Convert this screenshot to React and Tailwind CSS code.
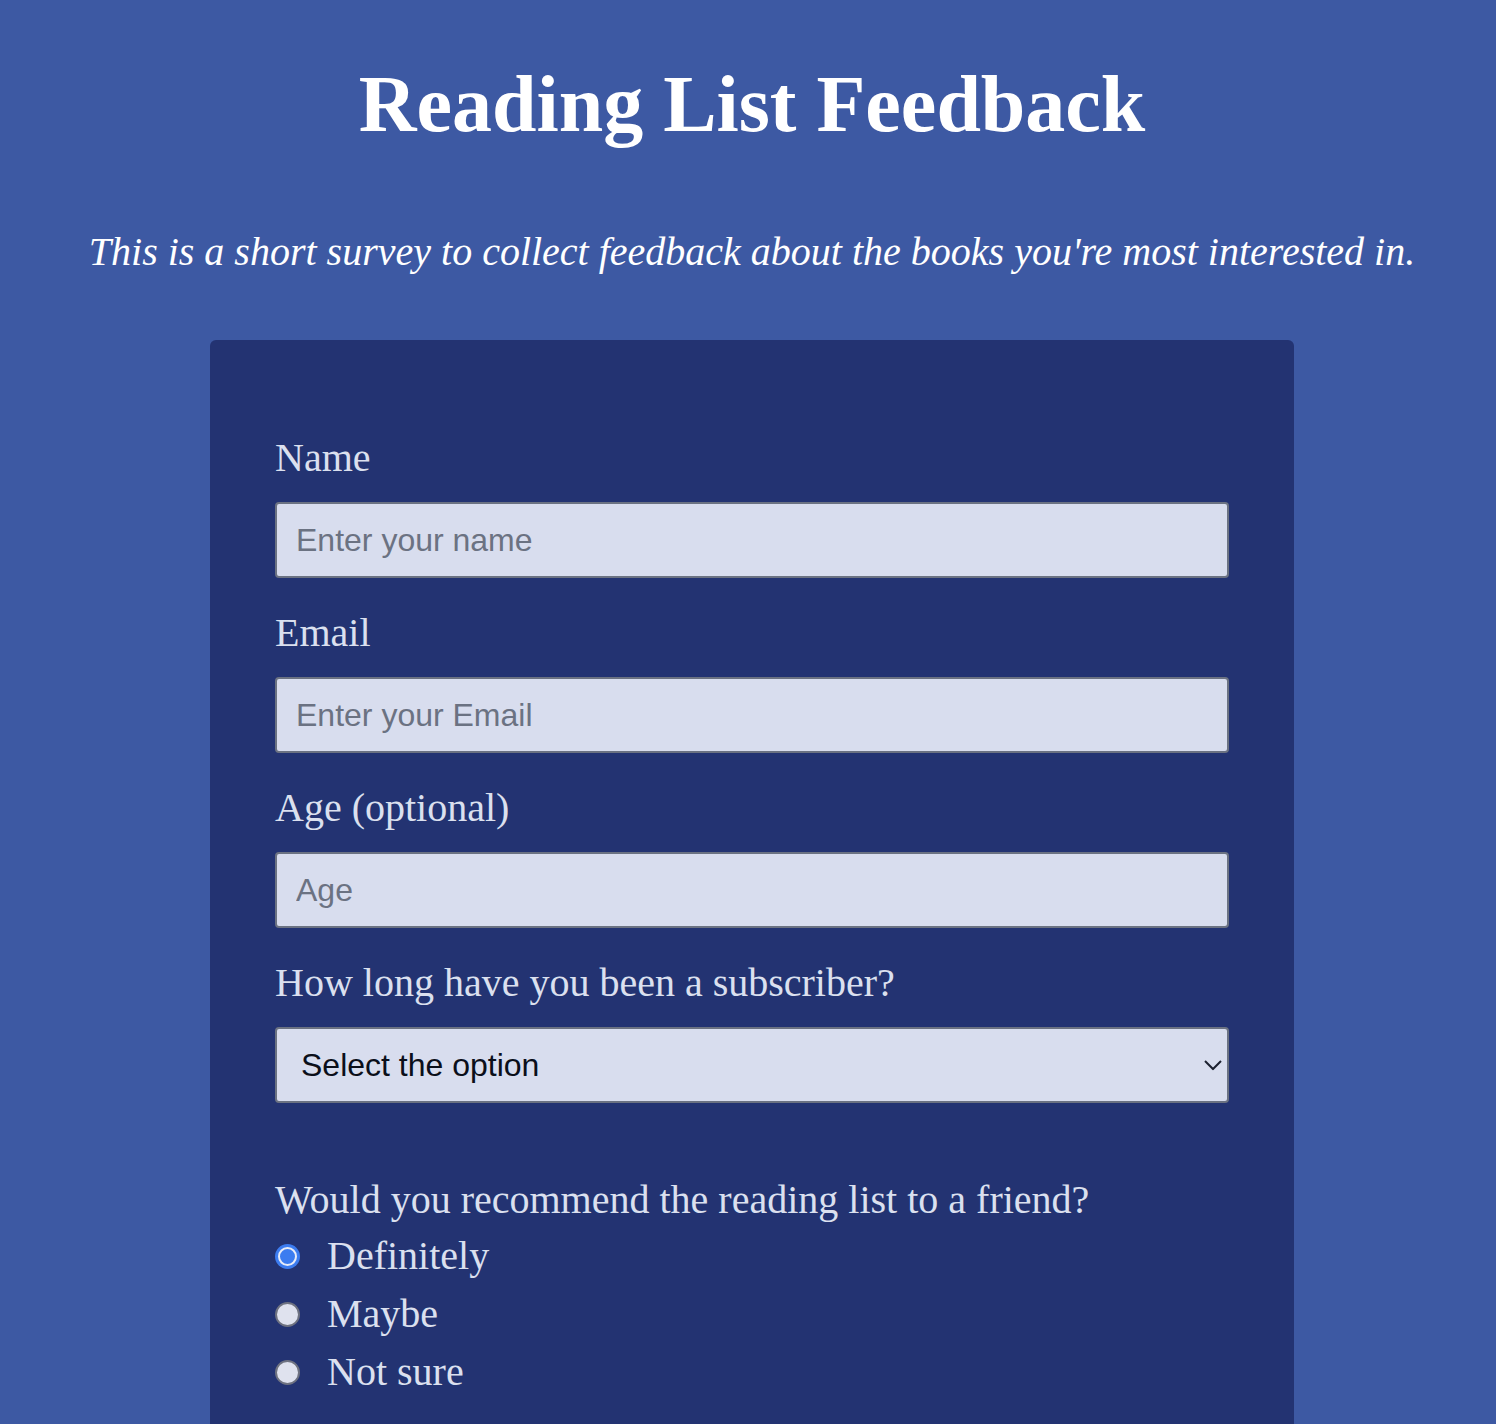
import { useState } from 'react';

const serif = { fontFamily: '"Liberation Serif", "Times New Roman", serif' };

function Field({ label, placeholder, type = 'text' }) {
  return (
    <div className="mb-[32px]">
      <label className="block text-[40px] leading-[46px] text-[#dbe0ef] mb-[21px]">{label}</label>
      <input
        type={type}
        placeholder={placeholder}
        className="block w-full h-[76px] rounded-[4px] border-2 border-[#6b7282] bg-[#d8ddee] px-[19px] text-[32px] text-[#1f2937] placeholder:text-[#6b7282] outline-none"
        style={{ fontFamily: '"Liberation Sans", Arial, sans-serif' }}
      />
    </div>
  );
}

function Radio({ label, checked, onClick }) {
  return (
    <button type="button" onClick={onClick} className="flex items-center h-[58px] text-left">
      {checked ? (
        <span className="flex w-[25px] h-[25px] rounded-full bg-[#3c7cf0] p-[3px]">
          <span className="w-full h-full rounded-full border-[2px] border-[#e8ecf8] bg-[#3c7cf0]" />
        </span>
      ) : (
        <span className="w-[25px] h-[25px] rounded-full border-2 border-[#6e7280] bg-[#dfe2ee]" />
      )}
      <span className="ml-[27px] text-[40px] text-[#dbe0ef]">{label}</span>
    </button>
  );
}

export default function App() {
  const [pick, setPick] = useState('Definitely');

  return (
    <div className="min-h-screen bg-[#3d59a3] pl-[8px]" style={serif}>
      <h1 className="pt-[58px] text-center text-[80px] leading-[92px] font-bold text-white">Reading List Feedback</h1>
      <p className="mt-[79px] text-center text-[40px] leading-[46px] italic text-white">
        This is a short survey to collect feedback about the books you're most interested in.
      </p>

      <form className="mx-auto mt-[65px] w-[1084px] rounded-[6px] bg-[#233372] px-[65px] pt-[95px] pb-16">
        <Field label="Name" placeholder="Enter your name" />
        <Field label="Email" placeholder="Enter your Email" type="email" />
        <Field label="Age (optional)" placeholder="Age" type="number" />

        <div>
          <label className="block text-[40px] leading-[46px] text-[#dbe0ef] mb-[21px]">How long have you been a subscriber?</label>
          <div className="relative">
            <select
              defaultValue=""
              className="block w-full h-[76px] appearance-none rounded-[4px] border-2 border-[#6b7282] bg-[#d8ddee] pl-[24px] text-[32px] text-[#0b0f1a] outline-none"
              style={{ fontFamily: '"Liberation Sans", Arial, sans-serif' }}
            >
              <option value="" disabled>Select the option</option>
              <option>Less than a year</option>
              <option>1-3 years</option>
              <option>More than 3 years</option>
            </select>
            <svg className="pointer-events-none absolute right-[7px] top-1/2 -translate-y-1/2" width="18" height="11" viewBox="0 0 18 11" fill="none">
              <path d="M1 1.5l8 8 8-8" stroke="#1c2130" strokeWidth="2" />
            </svg>
          </div>
        </div>

        <p className="mt-[74px] mb-[4px] text-[40px] leading-[46px] text-[#dbe0ef]">Would you recommend the reading list to a friend?</p>
        <div className="flex flex-col items-start">
          {['Definitely', 'Maybe', 'Not sure'].map(o => (
            <Radio key={o} label={o} checked={pick === o} onClick={() => setPick(o)} />
          ))}
        </div>
      </form>
    </div>
  );
}
